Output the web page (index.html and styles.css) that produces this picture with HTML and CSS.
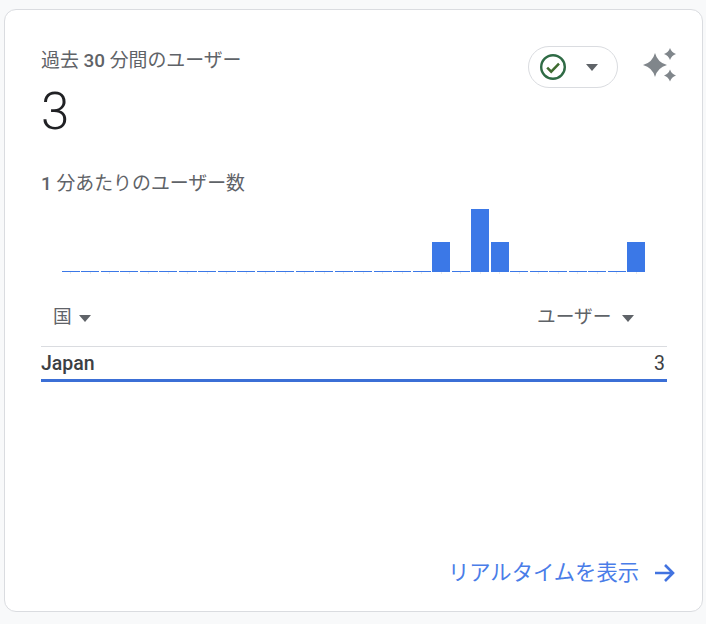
FILE: index.html
```html
<!DOCTYPE html>
<html lang="ja">
  <head>
    <meta charset="UTF-8" />
    <meta name="viewport" content="width=device-width, initial-scale=1.0" />
    <title>リアルタイム</title>
    <link rel="stylesheet" href="styles.css">
  </head>
  <body>
    <div class="card">
      <div class="top">
        <div class="summary">
          <div class="label">過去 <b>30</b> 分間のユーザー</div>
          <div class="total">3</div>
        </div>
        <div class="actions">
          <div class="pill">
            <svg class="check" width="26" height="26" viewBox="0 0 26 26">
              <circle cx="13" cy="13" r="11.800" fill="none" stroke="#2f6b45" stroke-width="2.400" />
              <path d="M7.200 13.600l4 4 7.800-8" fill="none" stroke="#3f6b2f" stroke-width="2.500" />
            </svg>
            <span class="caret"></span>
          </div>
          <svg class="spark" width="36" height="36" viewBox="0 0 36 36">
            <path fill="#80868b" d="M13 6Q15.500 15.500 25 18Q15.500 20.500 13 30Q10.500 20.500 1 18Q10.500 15.500 13 6z" />
            <path fill="#80868b" d="M28 1Q29.500 5.500 34 7Q29.500 8.500 28 13Q26.500 8.500 22 7Q26.500 5.500 28 1z" />
            <path fill="#80868b" d="M28 22.500Q29.500 27 34 28.500Q29.500 30 28 34.500Q26.500 30 22 28.500Q26.500 27 28 22.500z" />
          </svg>
        </div>
      </div>

      <div class="label per-min"><b>1</b> 分あたりのユーザー数</div>
      <div class="chart" id="chart"></div>

      <div class="table-head">
        <div class="col">国 <span class="caret"></span></div>
        <div class="col col-users">ユーザー <span class="caret"></span></div>
      </div>
      <div class="row">
        <span class="country">Japan</span>
        <span class="value">3</span>
      </div>
      <div class="row-bar"></div>

      <a class="more" href="#">
        リアルタイムを表示
        <svg width="24" height="24" viewBox="0 0 24 24">
          <path d="M2 12h17M12 4l8 8-8 8" fill="none" stroke="#4273e0" stroke-width="2.600" />
        </svg>
      </a>
    </div>
    <script>
      const chart = document.querySelector('#chart')
      const values = [0,0,0,0,0,0,0,0,0,0,0,0,0,0,0,0,0,0,0,1,0,2,1,0,0,0,0,0,0,1]
      const heights = [1, 30, 63]

      values.forEach((value) => {
        const col = document.createElement('div')
        col.className = 'bar-col'
        const bar = document.createElement('div')
        bar.className = 'bar'
        bar.style.height = `${heights[value]}px`
        const tick = document.createElement('div')
        tick.className = 'tick'
        col.appendChild(bar)
        col.appendChild(tick)
        chart.appendChild(col)
      })
    </script>
  </body>
</html>
```

FILE: styles.css
```css
* {
  box-sizing: border-box;
}

body {
  margin: 0;
  padding: 9px 3px 12px 4px;
  background: #f8f9fa;
  font-family: Roboto, "Noto Sans CJK JP", sans-serif;
  color: #5f6368;
}

.card {
  display: flex;
  flex-direction: column;
  height: 603px;
  padding: 39px 35px 26px 36px;
  background: #fff;
  border: 1px solid #dadce0;
  border-radius: 12px;
}

.top {
  display: flex;
  justify-content: space-between;
  align-items: flex-start;
}

.label {
  font-size: 18.900px;
  line-height: 24px;
}

.label b {
  font-weight: 500;
}

.total {
  margin-top: 9px;
  font-size: 51px;
  font-weight: 300;
  line-height: 60px;
  color: #202124;
}

.actions {
  display: flex;
  align-items: flex-start;
  gap: 24px;
  margin-right: -11px;
  margin-top: -3px;
}

.pill {
  display: flex;
  align-items: center;
  gap: 20px;
  width: 90px;
  height: 42px;
  padding-left: 11px;
  border: 1px solid #dadce0;
  border-radius: 21px;
}

.spark {
  margin-top: 1px;
}

.caret {
  display: inline-block;
  width: 0;
  height: 0;
  border-left: 6.500px solid transparent;
  border-right: 6.500px solid transparent;
  border-top: 7px solid #5f6368;
}

.per-min {
  margin-top: 30px;
}

.chart {
  display: grid;
  grid-template-columns: repeat(30, 1fr);
  column-gap: 1.500px;
  align-items: end;
  height: 68px;
  margin: 10px 22px 0 21px;
}

.bar-col {
  display: flex;
  flex-direction: column;
  align-items: center;
}

.bar {
  width: 100%;
  background: #3b78e7;
}

.tick {
  width: 1px;
  height: 2px;
  background: #e8eaed;
}

.table-head {
  display: flex;
  justify-content: space-between;
  height: 72px;
  padding: 31px 33px 0 12px;
  font-size: 18.700px;
  line-height: 24px;
}

.col .caret {
  margin-left: 3px;
  vertical-align: middle;
}

.col-users .caret {
  margin-left: 6px;
}

.row {
  display: flex;
  justify-content: space-between;
  height: 33px;
  padding: 5px 2px 0 0;
  border-top: 1px solid #dadce0;
  font-size: 19.500px;
  line-height: 24px;
  color: #3c4043;
}

.country {
  font-weight: 500;
}

.row-bar {
  height: 3px;
  background: #3b6fd6;
}

.more {
  display: flex;
  align-items: center;
  justify-content: flex-end;
  gap: 14px;
  margin-top: auto;
  margin-right: -10px;
  font-size: 21.300px;
  line-height: 24px;
  color: #4a7de8;
  text-decoration: none;
}
```
